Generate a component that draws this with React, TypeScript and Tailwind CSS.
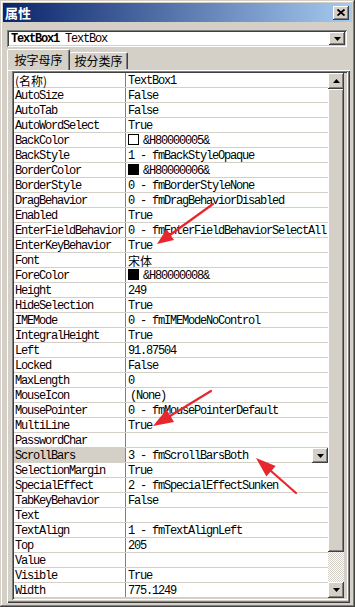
import React from 'react';

type Row = {
  name: string;
  value: string;
  swatch?: 'white' | 'black';
  selected?: boolean;
  indent?: boolean;
};

const ROWS: Row[] = [
  { name: '(名称)', value: 'TextBox1' },
  { name: 'AutoSize', value: 'False' },
  { name: 'AutoTab', value: 'False' },
  { name: 'AutoWordSelect', value: 'True' },
  { name: 'BackColor', value: '&H80000005&', swatch: 'white' },
  { name: 'BackStyle', value: '1 - fmBackStyleOpaque' },
  { name: 'BorderColor', value: '&H80000006&', swatch: 'black' },
  { name: 'BorderStyle', value: '0 - fmBorderStyleNone' },
  { name: 'DragBehavior', value: '0 - fmDragBehaviorDisabled' },
  { name: 'Enabled', value: 'True' },
  { name: 'EnterFieldBehavior', value: '0 - fmEnterFieldBehaviorSelectAll' },
  { name: 'EnterKeyBehavior', value: 'True' },
  { name: 'Font', value: '宋体' },
  { name: 'ForeColor', value: '&H80000008&', swatch: 'black' },
  { name: 'Height', value: '249' },
  { name: 'HideSelection', value: 'True' },
  { name: 'IMEMode', value: '0 - fmIMEModeNoControl' },
  { name: 'IntegralHeight', value: 'True' },
  { name: 'Left', value: '91.87504' },
  { name: 'Locked', value: 'False' },
  { name: 'MaxLength', value: '0' },
  { name: 'MouseIcon', value: '(None)', indent: true },
  { name: 'MousePointer', value: '0 - fmMousePointerDefault' },
  { name: 'MultiLine', value: 'True' },
  { name: 'PasswordChar', value: '' },
  { name: 'ScrollBars', value: '3 - fmScrollBarsBoth', selected: true },
  { name: 'SelectionMargin', value: 'True' },
  { name: 'SpecialEffect', value: '2 - fmSpecialEffectSunken' },
  { name: 'TabKeyBehavior', value: 'False' },
  { name: 'Text', value: '' },
  { name: 'TextAlign', value: '1 - fmTextAlignLeft' },
  { name: 'Top', value: '205' },
  { name: 'Value', value: '' },
  { name: 'Visible', value: 'True' },
  { name: 'Width', value: '775.1249' },
];

// 윈도우 클래식 버튼 테두리
const RAISED =
  'bg-[#d4d0c8] shadow-[inset_-1px_-1px_#404040,inset_1px_1px_#ffffff,inset_-2px_-2px_#808080,inset_2px_2px_#d4d0c8]';
const SUNKEN =
  'shadow-[inset_1px_1px_#808080,inset_-1px_-1px_#ffffff,inset_2px_2px_#404040,inset_-2px_-2px_#d4d0c8]';
const CJK = "tracking-normal [font-family:'Noto_Sans_CJK_SC',sans-serif]";

const DownTri = () => (
  <svg width="7" height="4" viewBox="0 0 7 4">
    <path d="M0 0h7L3.5 4z" fill="#000" />
  </svg>
);

const UpTri = () => (
  <svg width="7" height="4" viewBox="0 0 7 4">
    <path d="M0 4h7L3.5 0z" fill="#000" />
  </svg>
);

const Arrow = ({ tail, base, head }: { tail: [number, number]; base: [number, number]; head: string }) => (
  <>
    <line x1={tail[0]} y1={tail[1]} x2={base[0]} y2={base[1]} stroke="#e8262d" strokeWidth="2.2" strokeLinecap="round" />
    <polygon points={head} fill="#e8262d" />
  </>
);

const App = () => {
  return (
    <div
      className="relative flex h-[607px] w-[355px] flex-col overflow-hidden bg-[#d4d0c8] p-[3px] shadow-[inset_-1px_-1px_#404040,inset_1px_1px_#d4d0c8,inset_-2px_-2px_#808080,inset_2px_2px_#ffffff]"
      style={{ fontFamily: "'Liberation Mono', 'Noto Sans CJK SC', monospace" }}
    >
      {/* 타이틀 바 */}
      <div className="flex h-[19px] shrink-0 items-center justify-between bg-[linear-gradient(to_right,#0a246a,#a6caf0)] pl-[2px] pr-[3px]">
        <span className="text-[13px] font-bold leading-none text-white [font-family:'Noto_Sans_CJK_SC',sans-serif]">
          属性
        </span>
        <div className={`flex h-[14px] w-[16px] items-center justify-center ${RAISED}`}>
          <svg width="8" height="7" viewBox="0 0 8 7">
            <path d="M0.5 0.5L7.5 6.5M7.5 0.5L0.5 6.5" stroke="#000" strokeWidth="1.8" />
          </svg>
        </div>
      </div>

      {/* 객체 선택 콤보 */}
      <div className="mt-[8px] shrink-0 pl-[4px] pr-[5px]">
        <div className={`flex h-[17px] items-center bg-white pl-[4px] pr-[2px] ${SUNKEN}`}>
          <span className="flex-1 whitespace-pre pt-[1px] text-[12px] leading-none tracking-[-1.2px] text-black">
            <b>TextBox1</b> TextBox
          </span>
          <div className={`flex h-[13px] w-[16px] items-center justify-center ${RAISED}`}>
            <DownTri />
          </div>
        </div>
      </div>

      {/* 탭 */}
      <div className="relative z-10 mt-[3px] flex h-[20px] shrink-0 items-end pl-[4px] text-[12px] text-black [font-family:'Noto_Sans_CJK_SC',sans-serif]">
        <div className="flex h-[21px] w-[63px] items-center justify-center rounded-t-[2px] border-l border-t border-r border-l-white border-t-white border-r-[#404040] bg-[#d4d0c8] leading-none shadow-[inset_-1px_0_#808080]">
          按字母序
        </div>
        <div className="mb-[1px] flex h-[17px] w-[58px] items-center justify-center rounded-t-[2px] border-t border-r border-t-white border-r-[#404040] leading-none shadow-[inset_-1px_0_#808080]">
          按分类序
        </div>
      </div>

      {/* 탭 패널 */}
      <div className="mb-[1px] ml-[4px] mr-[2px] flex flex-1 flex-col border-l border-t border-l-white border-t-white pl-[4px] pr-[2px] pb-[2px] shadow-[inset_-1px_-1px_#404040,inset_-2px_-2px_#808080]">
        <div className={`flex p-[2px] ${SUNKEN}`}>
          {/* 속성 목록 */}
          <div className="flex w-[314px] flex-col bg-white text-[12px] tracking-[-1.2px] text-black">
            {ROWS.map((r) => (
              <div key={r.name} className="flex h-[15px] border-b border-[#d4d0c8]">
                <div
                  className={`w-[112px] shrink-0 whitespace-nowrap border-r border-[#808080] pl-[1px] pt-[2px] leading-[12px] ${
                    r.selected ? 'bg-[#d4d0c8]' : ''
                  }`}
                >
                  {r.name.startsWith('(') ? <span className={CJK}>{r.name}</span> : r.name}
                </div>
                <div className="relative flex flex-1 items-start whitespace-nowrap pl-[2px] pt-[2px] leading-[12px]">
                  {r.swatch && (
                    <span
                      className={`mr-[4px] mt-[-1px] inline-block h-[11px] w-[11px] shrink-0 border border-black ${
                        r.swatch === 'black' ? 'bg-black' : 'bg-white'
                      }`}
                    />
                  )}
                  <span className={r.value === '宋体' ? CJK : r.indent ? 'pl-[2px]' : ''}>{r.value}</span>
                  {r.selected && (
                    <div className={`absolute right-0 top-0 flex h-[15px] w-[16px] items-center justify-center ${RAISED}`}>
                      <DownTri />
                    </div>
                  )}
                </div>
              </div>
            ))}
          </div>

          {/* 스크롤바 */}
          <div className="flex w-[16px] flex-col">
            <div className={`flex h-[16px] items-center justify-center ${RAISED}`}>
              <UpTri />
            </div>
            <div className={`h-[463px] ${RAISED}`} />
            <div className="flex-1 bg-[repeating-conic-gradient(#ffffff_0_25%,#d4d0c8_0_50%)] bg-[length:2px_2px]" />
            <div className={`flex h-[16px] items-center justify-center ${RAISED}`}>
              <DownTri />
            </div>
          </div>
        </div>
      </div>

      {/* 빨간 화살표 주석 */}
      <svg className="pointer-events-none absolute left-0 top-0" width="355" height="607">
        <Arrow tail={[213, 204]} base={[170, 235]} head="157,244 174,240 166.5,229" />
        <Arrow tail={[211, 391]} base={[170, 416]} head="153,426 174,422 166.5,409.5" />
        <Arrow tail={[296, 493]} base={[271, 471]} head="256,458 275.6,466 266.4,476.5" />
      </svg>
    </div>
  );
};

export default App;
